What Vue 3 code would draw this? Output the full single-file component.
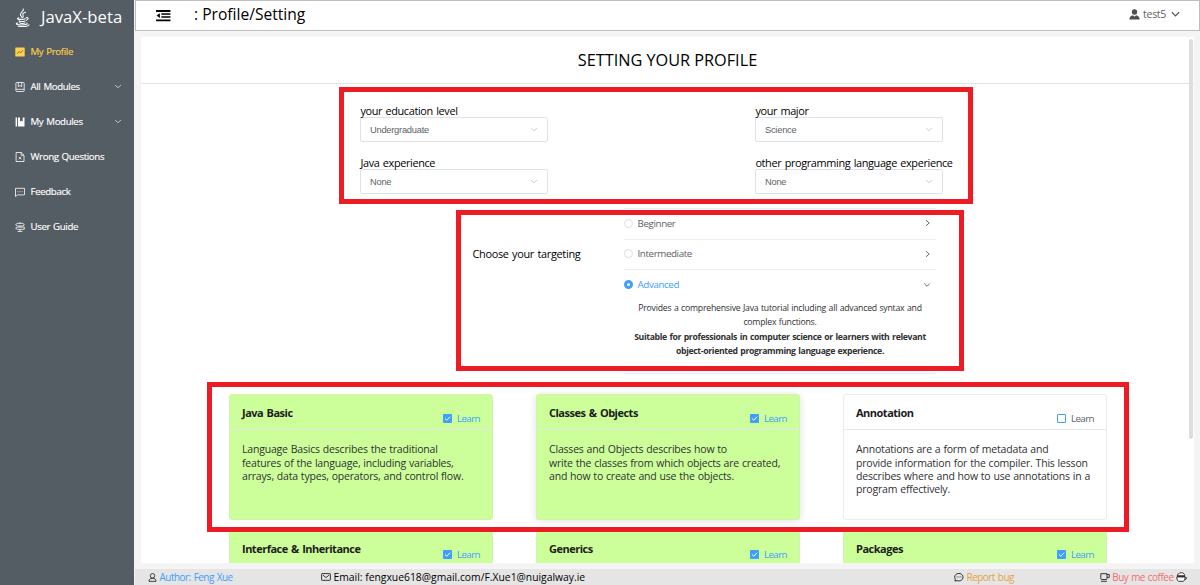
<script setup>
const menu = [
  { label: 'My Profile', icon: 'chart', active: true },
  { label: 'All Modules', icon: 'notebook', more: true },
  { label: 'My Modules', icon: 'book', more: true },
  { label: 'Wrong Questions', icon: 'file' },
  { label: 'Feedback', icon: 'chat' },
  { label: 'User Guide', icon: 'guide' },
]
const fields = [
  { label: 'your education level', value: 'Undergraduate' },
  { label: 'your major', value: 'Science' },
  { label: 'Java experience', value: 'None' },
  { label: 'other programming language experience', value: 'None' },
]
const cards = [
  { title: 'Java Basic', lines: ['Language Basics describes the traditional', 'features of the language, including variables,', 'arrays, data types, operators, and control flow.'], on: true },
  { title: 'Classes & Objects', lines: ['Classes and Objects describes how to', 'write the classes from which objects are created,', 'and how to create and use the objects.'], on: true, hover: true },
  { title: 'Annotation', lines: ['Annotations are a form of metadata and', 'provide information for the compiler. This lesson', 'describes where and how to use annotations in a', 'program effectively.'], on: false },
  { title: 'Interface & Inheritance', lines: [], on: true },
  { title: 'Generics', lines: [], on: true },
  { title: 'Packages', lines: [], on: true },
]
</script>

<template>
  <div class="page">
    <aside class="side">
      <div class="brand">
        <svg class="java" viewBox="0 0 16 20" fill="none" stroke="#fff" stroke-width="1.1" stroke-linecap="round">
          <path d="M8.8 .8C10 3.300 5 4.500 5.800 7.200C6 8.300 7.200 9 7.400 10M11.200 4.300C8.500 5.200 7.700 6.500 8.600 7.800C9 8.500 8.900 9.300 8.300 10" />
          <path d="M4.200 10.200C1 11.300 3 12.100 6.500 12C9 12 10.500 11.600 11 11.400M12 10.200C14.800 9.700 14.500 12 12 12.900M4.500 13.300C4 14.500 8 14.700 10.600 13.800M5 15.400C5 16.500 8.500 16.700 10.600 15.900M3 15.800C-.5 16.600 2 17.900 6.500 17.900C11 17.900 14 17.200 12.600 16M3.500 19.400C8 19.900 13.500 19.500 15 17.900" />
        </svg>
        <span>JavaX-beta</span>
      </div>
      <div v-for="m in menu" :key="m.label" class="item" :class="{ active: m.active }">
        <svg class="ico" viewBox="0 0 10 10" fill="none" stroke="currentColor" stroke-width=".8">
          <template v-if="m.icon === 'chart'">
            <rect x=".3" y=".5" width="9.400" height="9" rx=".6" fill="currentColor" stroke="none" />
            <path d="M2 6.600L4 4.700L5.600 5.800L8 3.200" stroke="#545c64" />
          </template>
          <template v-else-if="m.icon === 'notebook'">
            <rect x=".9" y=".5" width="8.300" height="9" rx=".8" />
            <path d="M1 7.300H9M3.300 .6V4.700L5 3.600L6.700 4.700V.6" />
          </template>
          <template v-else-if="m.icon === 'book'">
            <path d="M.6 .6H2V9.500H.6ZM2.900 .6H5V4.600L6.400 3.700L7.700 4.600V.6H9.500V9.500H2.900Z" fill="currentColor" stroke="none" />
          </template>
          <template v-else-if="m.icon === 'file'">
            <path d="M1.100 .5H6.200L9 3.300V9.500H1.100ZM6.200 .5V3.300H9M3.800 4.800L6.300 7.300M6.300 4.800L3.800 7.300" />
          </template>
          <template v-else-if="m.icon === 'chat'">
            <path d="M.5 1.300H9.500V7.900H2.400L.5 9.500ZM2.500 4.700H3.400M4.600 4.700H5.500M6.700 4.700H7.600" />
          </template>
          <template v-else>
            <path d="M5 0V1.200M2.200 1.400H7.800L9.400 2.700L7.800 4H2.200L.6 2.700ZM5 4V5M2.400 5.100H9.300V7.300H2.400L.6 6.200ZM5 7.400V9.300M2.600 9.400H7.400" />
          </template>
        </svg>
        <span class="label">{{ m.label }}</span>
        <svg v-if="m.more" class="arrow" viewBox="0 0 8 5"><path d="M1 1L4 3.700L7 1" /></svg>
      </div>
    </aside>

    <div class="body">
      <header class="top">
        <svg class="fold" viewBox="0 0 15 12"><path d="M0 0H15V2H0ZM5.500 3.500H15V5H5.500ZM5.500 6.500H15V8H5.500ZM0 9.800H15V11.800H0ZM4 3.300V8.300L.5 5.800Z" /></svg>
        <span class="crumb">: Profile/Setting</span>
        <div class="user">
          <svg class="avatar" viewBox="0 0 11 11"><circle cx="5.500" cy="3" r="2.700" /><path d="M.4 10.600C.4 7.500 2 6.600 3.900 6.200L5.500 7.800L7.100 6.200C9 6.600 10.600 7.500 10.600 10.600Z" /></svg>
          <span>test5</span>
          <svg class="caret" viewBox="0 0 10 6"><path d="M1 1L5 5L9 1" /></svg>
        </div>
      </header>

      <main class="main">
        <h1>SETTING YOUR PROFILE</h1>
        <section class="form">
          <div v-for="f in fields" :key="f.label" class="field">
            <label>{{ f.label }}</label>
            <div class="select">
              <span>{{ f.value }}</span>
              <svg class="arrow" viewBox="0 0 8 5"><path d="M1 1L4 3.900L7 1" /></svg>
            </div>
          </div>
        </section>

        <section class="target">
          <div class="ask">Choose your targeting</div>
          <div class="collapse">
            <div class="row"><i class="radio"></i><span>Beginner</span><svg class="chev" viewBox="0 0 6 8"><path d="M1 1.200L4.200 4L1 6.800" /></svg></div>
            <div class="row"><i class="radio"></i><span>Intermediate</span><svg class="chev" viewBox="0 0 6 8"><path d="M1 1.200L4.200 4L1 6.800" /></svg></div>
            <div class="row open"><i class="radio on"></i><span>Advanced</span><svg class="chev down" viewBox="0 0 8 6"><path d="M1.200 1.500L4 4.300L6.800 1.500" /></svg></div>
            <div class="detail">
              <p class="d1">Provides a comprehensive Java tutorial including all advanced syntax and</p>
              <p class="d1">complex functions.</p>
              <p class="d2">Suitable for professionals in computer science or learners with relevant</p>
              <p class="d2">object-oriented programming language experience.</p>
            </div>
          </div>
        </section>

        <section class="cards">
          <article v-for="c in cards" :key="c.title" class="card" :class="{ on: c.on, hover: c.hover }">
            <div class="head">
              <h2>{{ c.title }}</h2>
              <div class="learn">
                <i class="box"><svg v-if="c.on" viewBox="0 0 9 9"><path d="M1.900 4.400L3.800 6.200L7.100 2.700" /></svg></i>
                <span>Learn</span>
              </div>
            </div>
            <div class="text"><div v-for="l in c.lines" :key="l">{{ l }}</div></div>
          </article>
        </section>
        <div class="bar"></div>
      </main>

      <footer class="foot">
        <div class="author">
          <svg class="f1" viewBox="0 0 9 10"><circle cx="4.500" cy="3.100" r="2.500" /><path d="M.6 9.300C.6 6.900 2 5.900 4.500 5.900S8.400 6.900 8.400 9.300Z" /></svg>
          <span>Author: Feng Xue</span>
        </div>
        <div class="mail">
          <svg class="f2" viewBox="0 0 10 8"><rect x=".6" y=".6" width="8.800" height="6.700" rx=".5" /><path d="M1.800 2L5 4.600L8.200 2" /></svg>
          <span>Email: fengxue618@gmail.com/F.Xue1@nuigalway.ie</span>
        </div>
        <div class="bug">
          <svg class="f3" viewBox="0 0 10 10"><path d="M.9 9.100L1.300 7.200A4.200 3.800 0 1 1 3 8.600ZM2.600 5H3.500M4.500 5H5.400M6.400 5H7.300" /></svg>
          <span>Report bug</span>
        </div>
        <div class="coffee">
          <svg class="f4" viewBox="0 0 10 9"><path d="M.8 .7H7V5.500Q7 6.500 6 6.500H1.800Q.8 6.500 .8 5.500ZM7 1.500H9.300V4.400H7M1 8.300H7" /></svg>
          <span>Buy me coffee</span>
          <svg class="f5" viewBox="0 0 11 10"><path d="M1.300 3.600Q1.200 2 2.800 1.900Q3.600 .3 5.300 .8Q7.300 .4 7.700 1.900Q9 2.200 8.700 3.600" fill="#fff" /><path d="M1 3.200H9V5H1Z" fill="#4a2d24" stroke="none" /><path d="M.8 4.900Q.6 8.800 2.600 9.300H7.200Q9.200 9 9.200 5ZM9.100 5.200Q11 5 10.300 6.800L8.900 7.800" fill="#fff" /></svg>
        </div>
      </footer>
    </div>
    <div class="mark m1"></div>
    <div class="mark m2"></div>
    <div class="mark m3"></div>
  </div>
</template>

<style>
html, body { margin: 0; overflow: hidden; }
</style>

<style scoped>
* { box-sizing: border-box; }
.page { position: relative; display: flex; width: 1200px; height: 585px; overflow: hidden; background: #f4f4f4; font-family: "Open Sans", "Noto Sans", sans-serif; color: #000; white-space: nowrap; }
svg { display: block; flex: none; overflow: visible; }
.side { width: 134px; flex: none; background: #545c64; color: #fff; }
.brand { height: 34px; display: flex; align-items: center; padding-left: 15px; font-size: 16.700px; line-height: 34px; }
.java { width: 15px; height: 19px; margin-right: 11px; }
.item { height: 35px; display: flex; align-items: center; padding: 0 12px 0 15px; font-size: 9.700px; letter-spacing: -.36px; word-spacing: .8px; -webkit-text-stroke: .15px currentColor; }
.item.active { color: #ffd04b; }
.ico { width: 10px; height: 10px; margin-right: 5.500px; }
.arrow { width: 8px; height: 5px; fill: none; stroke: #d5d7da; stroke-width: .8; margin-left: auto; }
.body { flex: 1; min-width: 0; padding-left: 1px; display: flex; flex-direction: column; }
.top { height: 31px; flex: none; display: flex; align-items: center; background: #fff; border: 1px solid #bebebe; padding: 0 19px 3px 20px; }
.fold { width: 14.500px; height: 11.500px; margin-top: 3.500px; }
.crumb { margin-left: 23.500px; font-size: 15.600px; line-height: 26px; }
.user { margin-left: auto; display: flex; align-items: center; font-size: 10.500px; letter-spacing: -.3px; color: #606266; }
.avatar { width: 11px; height: 11px; fill: #4b4f55; margin-right: 3px; }
.caret { width: 9px; height: 6px; margin-left: 5px; fill: none; stroke: #4b4f55; stroke-width: 1.300; }
.main { position: relative; margin: 6px 6px 0; height: 526px; flex: none; overflow: hidden; background: #fff; }
h1 { margin: 0; height: 47px; border-bottom: 1px solid #e1e3e6; text-align: center; font-size: 16.250px; font-weight: 400; line-height: 46px; }
.form { display: grid; grid-template-columns: 187px 187px; column-gap: 208px; row-gap: 0; padding: 20px 0 0 219px; height: 124px; align-content: start; }
.field { height: 52px; }
label { display: block; height: 13px; line-height: 13px; padding-left: .4px; font-size: 10.900px; letter-spacing: -.36px; word-spacing: .9px; }
.select { height: 25px; width: 188px; border: 1px solid #dfe2e8; border-radius: 2px; display: flex; align-items: center; padding: 0 9px; font-family: "Liberation Sans", Arial, sans-serif; font-size: 9.300px; letter-spacing: -.24px; color: #606266; }
.select .arrow { stroke: #c0c4cc; }
.target { display: flex; height: 166px; padding-left: 331.500px; }
.ask { width: 151.500px; padding-top: 39px; font-size: 10.900px; letter-spacing: -.3px; word-spacing: .9px; line-height: 14px; }
.collapse { width: 312px; border-top: 1px solid #ebeef5; border-bottom: 1px solid #ebeef5; }
.row { height: 30.500px; display: flex; align-items: center; border-bottom: 1px solid #ebeef5; padding-bottom: 1px; font-size: 9.800px; letter-spacing: -.4px; color: #606266; }
.row.open { border: 0; color: #409eff; padding-bottom: 1px; }
.radio { width: 9px; height: 9px; border: 1px solid #dcdfe6; border-radius: 50%; margin-right: 4.500px; }
.radio.on { border: 3px solid #409eff; }
.chev { width: 6px; height: 8px; margin: 0 5px 0 auto; fill: none; stroke: #45484d; stroke-width: .8; }
.chev.down { width: 8px; height: 6px; }
.detail { text-align: center; font-size: 8.700px; line-height: 14.500px; letter-spacing: -.22px; word-spacing: .5px; color: #303133; }
.detail p { margin: 0; }
.detail .d2 { font-weight: 700; letter-spacing: -.35px; word-spacing: .7px; }
.cards { display: grid; grid-template-columns: repeat(3, 264px); column-gap: 43px; row-gap: 10px; padding: 20px 0 0 88px; }
.card { height: 126px; border: 1px solid #e8ebf1; border-radius: 3px; color: #303133; }
.card.on { background: #cf9; border-color: #d2f3ae; }
.card.hover { box-shadow: 0 1px 8px rgba(0, 0, 0, .12); }
.head { height: 35px; border-bottom: 1px solid #e4e8ee; display: flex; justify-content: space-between; padding: 0 12px; }
h2 { margin: 0; font-size: 11px; line-height: 36px; letter-spacing: -.5px; word-spacing: 1px; color: #1c1c1c; }
.learn { display: flex; align-items: center; height: 15px; margin-top: 16px; font-size: 9.800px; letter-spacing: -.6px; color: #606266; }
.on .learn { color: #409eff; }
.box { width: 9px; height: 9px; margin-right: 5px; border: 1px solid #409eff; border-radius: 1px; background: #fff; }
.on .box { border: 0; background: #409eff; }
.box svg { width: 9px; height: 9px; fill: none; stroke: #fff; stroke-width: 1; }
.text { padding: 13.400px 12px; font-size: 10.500px; line-height: 13.200px; letter-spacing: -.19px; word-spacing: .4px; }
.bar { position: absolute; right: 1px; top: 2px; width: 4px; height: 400px; border-radius: 2px; background: #dedede; }
.foot { margin-top: 6px; height: 16px; flex: none; display: flex; align-items: center; background: #e5e5e5; padding: 0 13px 0 13px; font-size: 9.900px; line-height: 16px; letter-spacing: -.46px; word-spacing: .8px; }
.foot div { display: flex; align-items: center; gap: 2.500px; }
.foot svg { fill: none; stroke: #222; stroke-width: .9; }
.author { width: 173px; }
.author span { color: #409eff; }
.foot .mail { width: 633px; font-size: 10.350px; letter-spacing: 0; word-spacing: 0; }
.bug span { color: #e6a23c; }
.coffee { margin-left: auto; }
.coffee span { color: #f56c6c; }
.f1 { width: 9px; height: 9px; }
.f2 { width: 10px; height: 8px; }
.f3 { width: 10px; height: 10px; }
.f4 { width: 10px; height: 9px; }
.f5 { width: 11px; height: 10px; }
.mark { position: absolute; border: 5px solid #ed1c24; }
.m1 { left: 339px; top: 87px; width: 634px; height: 117px; }
.m2 { left: 456px; top: 210px; width: 508px; height: 161px; }
.m3 { left: 207px; top: 382px; width: 922px; height: 150px; }
</style>
